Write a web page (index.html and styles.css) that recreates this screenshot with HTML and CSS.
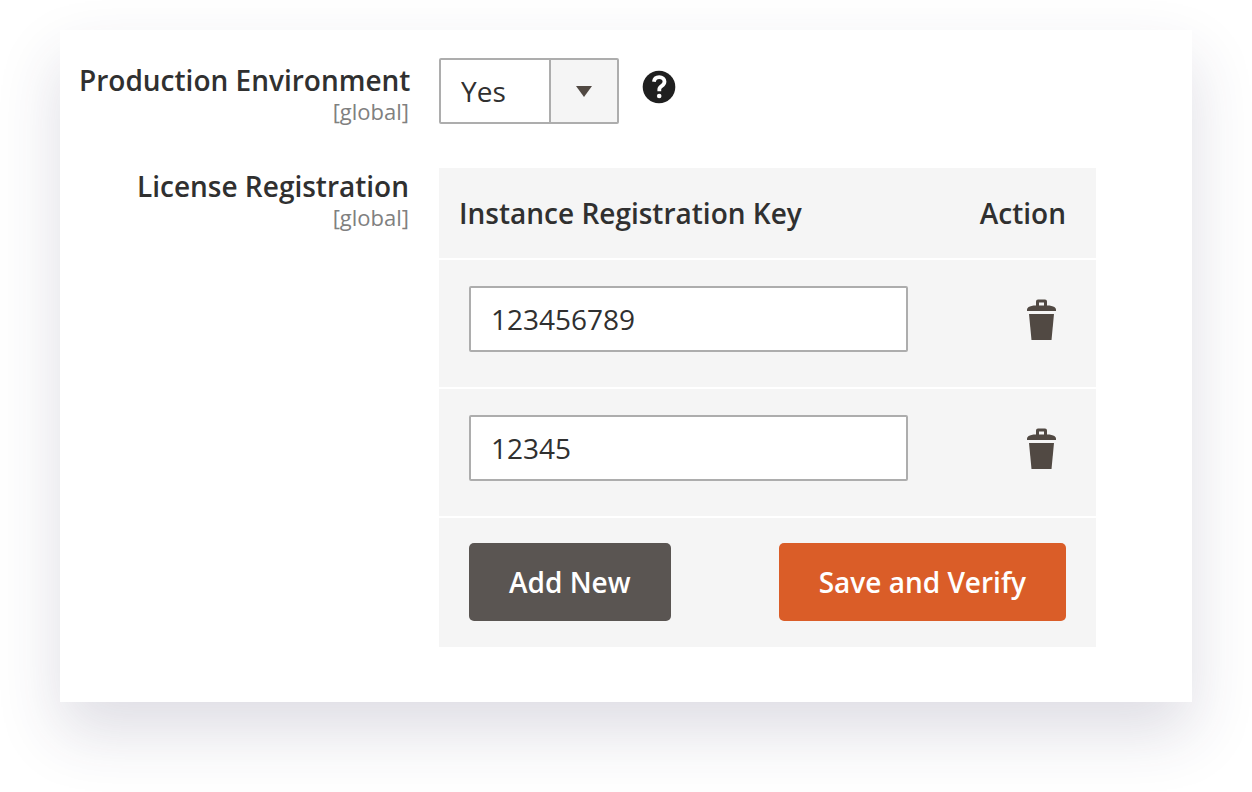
FILE: index.html
```html
<!DOCTYPE html>
<html lang="en">

<head>
  <meta charset="UTF-8">
  <meta name="viewport" content="width=device-width, initial-scale=1.0">
  <title>License Registration</title>
  <link rel="stylesheet" href="styles.css">
</head>

<body>
  <form class="config">
    <div class="row">
      <label class="label" for="environment">
        Production Environment
        <span class="scope">[global]</span>
      </label>
      <div class="field">
        <div class="select">
          <select id="environment">
            <option selected>Yes</option>
            <option>No</option>
          </select>
          <span class="arrow">
            <svg width="16" height="11" viewBox="0 0 16 11">
              <path d="M0 0h16L8 11z" fill="#514943" />
            </svg>
          </span>
        </div>
        <button type="button" class="help" aria-label="Help">
          <svg width="34" height="34" viewBox="0 0 34 34">
            <circle cx="17" cy="17" r="16.3" fill="#1f1f1f" />
            <path d="M11.9 11.8C12.3 8.700 14.200 7.200 17.200 7.200c3.200 0 5.300 1.700 5.300 4.400 0 2-1 3.200-2.700 4.300-1.800 1.200-2.500 1.900-2.500 3.700v1.600" fill="none"
              stroke="#fff" stroke-width="3.800" />
            <circle cx="17.2" cy="26" r="2.300" fill="#fff" />
          </svg>
        </button>
      </div>
    </div>

    <div class="row">
      <div class="label">
        License Registration
        <span class="scope">[global]</span>
      </div>
      <table class="keys">
        <thead>
          <tr>
            <th>Instance Registration Key</th>
            <th class="action">Action</th>
          </tr>
        </thead>
        <tbody>
          <tr>
            <td><input type="text" value="123456789" aria-label="Instance Registration Key 1"></td>
            <td class="action">
              <button type="button" class="delete" aria-label="Delete">
                <svg width="30" height="42" viewBox="0 0 30 42">
                  <path d="M10 7.500V3.500Q10 1.500 12 1.500h7Q21 1.500 21 3.500V7.500h2.500q6.500 1 6.500 4V13H1v-1.500Q1 8.500 7.500 7.500zM13 7.500h5V4.500h-5z" fill="#514943" fill-rule="evenodd" />
                  <path d="M3 16h25l-2.500 26H5.500z" fill="#514943" />
                </svg>
              </button>
            </td>
          </tr>
          <tr>
            <td><input type="text" value="12345" aria-label="Instance Registration Key 2"></td>
            <td class="action">
              <button type="button" class="delete" aria-label="Delete">
                <svg width="30" height="42" viewBox="0 0 30 42">
                  <path d="M10 7.500V3.500Q10 1.500 12 1.500h7Q21 1.500 21 3.500V7.500h2.500q6.500 1 6.500 4V13H1v-1.500Q1 8.500 7.500 7.500zM13 7.500h5V4.500h-5z" fill="#514943" fill-rule="evenodd" />
                  <path d="M3 16h25l-2.500 26H5.500z" fill="#514943" />
                </svg>
              </button>
            </td>
          </tr>
        </tbody>
        <tfoot>
          <tr>
            <td colspan="2">
              <div class="buttons">
                <button type="button" class="btn">Add New</button>
                <button type="submit" class="btn primary">Save and Verify</button>
              </div>
            </td>
          </tr>
        </tfoot>
      </table>
    </div>
  </form>
</body>

</html>
```

FILE: styles.css
```css
* {
  box-sizing: border-box;
}

body {
  margin: 0;
  padding: 30px 60px 90px;
  background-color: #ffffff;
  color: #303030;
  font-family: "Open Sans", "Noto Sans", sans-serif;
  font-size: 28px;
  line-height: 38px;
}

button,
input,
select {
  font: inherit;
  color: inherit;
}

.config {
  display: grid;
  gap: 40px;
  padding: 28px 96px 55px 19px;
  background-color: #ffffff;
  box-shadow: 0 30px 60px rgba(50, 45, 90, 0.16);
}

.row {
  display: grid;
  grid-template-columns: 330px 1fr;
  gap: 30px;
  align-items: start;
}

.label {
  padding-top: 3px;
  text-align: right;
  font-weight: 600;
  white-space: nowrap;
}

.scope {
  display: block;
  color: #808080;
  font-size: 22px;
  font-weight: 400;
  line-height: 24px;
}

.field {
  display: flex;
  align-items: flex-start;
  gap: 23px;
}

/* drop-down */
.select {
  position: relative;
}

.select select {
  display: block;
  width: 180px;
  height: 66px;
  padding: 0 70px 0 20px;
  border: 2px solid #adadad;
  border-radius: 2px;
  background-color: #ffffff;
  appearance: none;
}

.arrow {
  position: absolute;
  top: 2px;
  right: 2px;
  bottom: 2px;
  width: 68px;
  display: flex;
  align-items: center;
  justify-content: center;
  border-left: 2px solid #adadad;
  background-color: #f5f5f5;
  pointer-events: none;
}

.help,
.delete {
  display: block;
  padding: 0;
  border: 0;
  background: none;
  cursor: pointer;
}

.help {
  margin-top: 12px;
}

.help svg,
.delete svg {
  display: block;
}

/* keys table */
.keys {
  width: 100%;
  margin-top: 4px;
  table-layout: fixed;
  border-spacing: 0;
  background-color: #f5f5f5;
}

.keys th {
  padding: 26px 20px;
  border-bottom: 2px solid #ffffff;
  text-align: left;
  font-weight: 600;
}

.keys td {
  padding: 26px 0 35px 30px;
  border-bottom: 2px solid #ffffff;
}

.keys .action {
  width: 188px;
  padding-right: 30px;
  text-align: right;
}

.keys input {
  display: block;
  width: 100%;
  height: 66px;
  padding: 0 20px;
  border: 2px solid #adadad;
  border-radius: 2px;
  background-color: #ffffff;
}

.delete {
  margin: 0 10px 0 auto;
}

.keys tfoot td {
  padding: 25px 30px 26px;
  border-bottom: 0;
}

.buttons {
  display: flex;
  justify-content: space-between;
}

.btn {
  padding: 20px 40px;
  border: 0;
  border-radius: 5px;
  background-color: #5a5552;
  color: #ffffff;
  font-weight: 600;
  cursor: pointer;
}

.btn.primary {
  background-color: #da5d28;
}
```
